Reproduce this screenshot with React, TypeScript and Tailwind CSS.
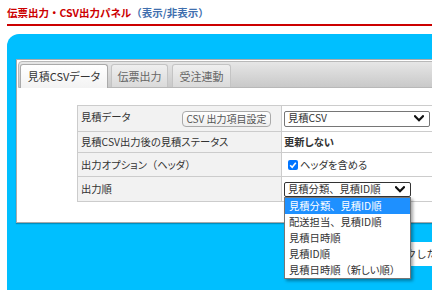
import React from "react";

function Chevron() {
  return (
    <svg width="10" height="7" viewBox="0 0 10 7" className="shrink-0">
      <path d="M1 1.2 L5 5.2 L9 1.2" fill="none" stroke="#111" strokeWidth="2.2" strokeLinecap="square" />
    </svg>
  );
}

// keep Japanese punctuation full-width while kana use proportional widths
function J({ t }: { t: string }) {
  const parts = t.split(/([、・（）])/);
  return (
    <>
      {parts.map((p, i) =>
        /^[、・（）]$/.test(p) ? (
          <span key={i} className="[font-feature-settings:normal]">
            {p}
          </span>
        ) : (
          <React.Fragment key={i}>{p}</React.Fragment>
        )
      )}
    </>
  );
}

export default function App() {
  const items = ["見積分類、見積ID順", "配送担当、見積ID順", "見積日時順", "見積ID順", "見積日時順（新しい順）"];
  return (
    <div className="w-[432px] h-[290px] overflow-hidden bg-white relative font-['Noto_Sans_CJK_JP',sans-serif] [font-feature-settings:'palt'] text-[10.3px] text-[#333]">
      {/* title */}
      <div className="pl-[7px] pt-[6px] h-[20px] leading-[14px] font-bold whitespace-nowrap text-[10.5px]">
        <span className="text-[#cc0000]">
          <J t="伝票出力・CSV出力パネル" />
        </span>
        <span className="text-[#3f6fae]">
          <J t="（表示/非表示）" />
        </span>
      </div>
      <div className="ml-[7px] mt-[4px] h-[2px] bg-[#cc0000]" />

      {/* blue panel */}
      <div className="ml-[7px] mt-[8px] w-[450px] h-[300px] rounded-tl-[12px] bg-[#00bfff] pt-[25px] pl-[9px]">
        <div className="w-[440px] h-[164px] border border-[#aaa] bg-white p-[1px] shadow-[0_1px_1px_rgba(0,0,0,0.25)]">
          {/* tab bar */}
          <div className="h-[27px] border border-[#b8b8b8] rounded-tl-[4px] bg-gradient-to-b from-[#e6e6e6] to-[#c9c9c9] flex items-end pl-[1px]">
            <div className="w-[88px] h-[24px] -mb-[1px] border border-b-0 border-[#aaa] rounded-t-[3px] bg-gradient-to-b from-[#ffffff] to-[#f3f3f3] flex items-center justify-center text-[#333] leading-none text-[11px]">
              見積CSVデータ
            </div>
            <div className="ml-[3px] w-[57px] h-[23px] border border-b-0 border-[#c4c4c4] rounded-t-[3px] bg-gradient-to-b from-[#efefef] to-[#dadada] flex items-center justify-center text-[#666] leading-none text-[11px]">
              伝票出力
            </div>
            <div className="ml-[4px] w-[59px] h-[23px] border border-b-0 border-[#c4c4c4] rounded-t-[3px] bg-gradient-to-b from-[#efefef] to-[#dadada] flex items-center justify-center text-[#666] leading-none text-[11px]">
              受注連動
            </div>
          </div>

          {/* table */}
          <div className="ml-[59px] mt-[17px] w-[400px] border border-[#ccc] relative">
            {/* row 1 */}
            <div className="flex h-[25px]">
              <div className="w-[203px] bg-[#f2f2f2] flex pl-[3px]">
                <span className="self-start pt-[4px] leading-[14px]">見積データ</span>
                <button className="self-center ml-auto mr-[10px] w-[89px] h-[16px] border border-[#aaa] rounded-[4px] bg-gradient-to-b from-[#ffffff] to-[#eeeeee] text-[#555] text-[10px] leading-none flex items-center justify-center">
                  CSV 出力項目設定
                </button>
              </div>
              <div className="flex-1 border-l border-[#ccc] flex items-center pl-[2px]">
                <div className="w-[146px] h-[16px] border border-[#767676] rounded-[2px] bg-white flex items-center pl-[3px] pr-[5px] leading-none">
                  <span className="flex-1">見積CSV</span>
                  <Chevron />
                </div>
              </div>
            </div>
            {/* row 2 */}
            <div className="flex h-[21px] border-t border-[#ccc]">
              <div className="w-[203px] bg-[#f2f2f2] flex items-center pl-[3px] whitespace-nowrap">見積CSV出力後の見積ステータス</div>
              <div className="flex-1 border-l border-[#ccc] flex items-center pl-[2px] font-bold">更新しない</div>
            </div>
            {/* row 3 */}
            <div className="flex h-[24px] border-t border-[#ccc]">
              <div className="w-[203px] bg-[#f2f2f2] flex items-center pl-[3px] whitespace-nowrap">
                <J t="出力オプション（ヘッダ）" />
              </div>
              <div className="flex-1 border-l border-[#ccc] flex items-center pl-[6px]">
                <span className="w-[10px] h-[10px] rounded-[2px] bg-[#0075ff] flex items-center justify-center">
                  <svg width="8" height="8" viewBox="0 0 8 8">
                    <path d="M1.2 4.2 L3.2 6.2 L6.8 1.8" fill="none" stroke="#fff" strokeWidth="1.6" />
                  </svg>
                </span>
                <span className="ml-[2px]">ヘッダを含める</span>
              </div>
            </div>
            {/* row 4 */}
            <div className="flex h-[25px] border-t border-[#ccc]">
              <div className="w-[203px] bg-[#f2f2f2] flex items-center pl-[3px]">出力順</div>
              <div className="flex-1 border-l border-[#ccc] flex items-center pl-[2px] relative">
                <div className="w-[127px] h-[15px] border border-[#333] rounded-[2px] bg-white flex items-center pl-[3px] pr-[5px] leading-none">
                  <span className="flex-1">
                    <J t="見積分類、見積ID順" />
                  </span>
                  <Chevron />
                </div>
                <div className="absolute left-[2px] top-[20px] w-[127px] border border-[#767676] bg-white shadow-[2px_2px_3px_rgba(0,0,0,0.35)] z-10">
                  {items.map((t, i) => (
                    <div
                      key={t}
                      className={
                        i === 0
                          ? "h-[16px] flex items-center pl-[4px] bg-[#1e90ff] text-white leading-none"
                          : "h-[16px] flex items-center pl-[4px] text-[#333] leading-none"
                      }
                    >
                      <J t={t} />
                    </div>
                  ))}
                </div>
              </div>
            </div>
          </div>
        </div>

        {/* partially hidden box */}
        <div className="ml-[354px] mt-[19px] h-[24px] bg-white flex items-center pl-[5px] whitespace-nowrap text-[#333] [font-feature-settings:normal]">
          チェックしたか
        </div>
      </div>
    </div>
  );
}
